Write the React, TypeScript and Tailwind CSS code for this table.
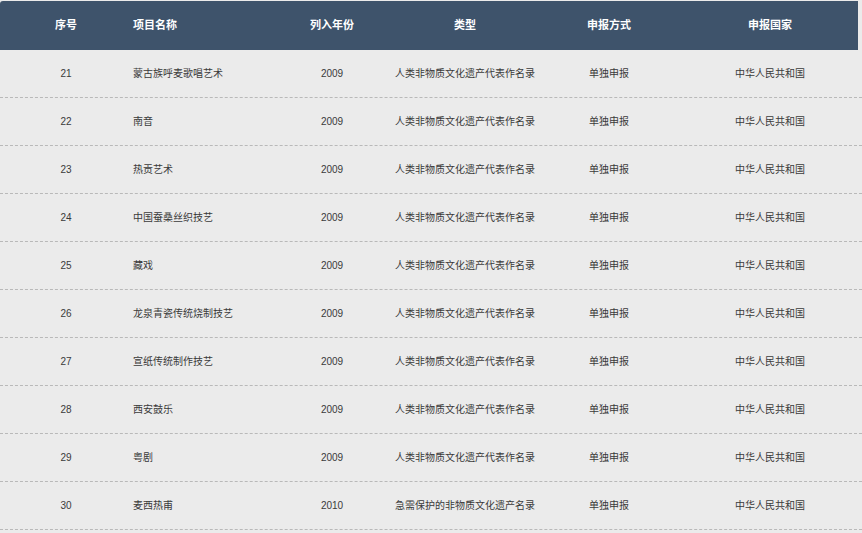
const rows = [
  ["21", "蒙古族呼麦歌唱艺术", "2009", "人类非物质文化遗产代表作名录"],
  ["22", "南音", "2009", "人类非物质文化遗产代表作名录"],
  ["23", "热贡艺术", "2009", "人类非物质文化遗产代表作名录"],
  ["24", "中国蚕桑丝织技艺", "2009", "人类非物质文化遗产代表作名录"],
  ["25", "藏戏", "2009", "人类非物质文化遗产代表作名录"],
  ["26", "龙泉青瓷传统烧制技艺", "2009", "人类非物质文化遗产代表作名录"],
  ["27", "宣纸传统制作技艺", "2009", "人类非物质文化遗产代表作名录"],
  ["28", "西安鼓乐", "2009", "人类非物质文化遗产代表作名录"],
  ["29", "粤剧", "2009", "人类非物质文化遗产代表作名录"],
  ["30", "麦西热甫", "2010", "急需保护的非物质文化遗产名录"],
];

const cols = "grid grid-cols-[132px_140px_120px_146px_142px_180px]";

export default function App() {
  return (
    <div
      className="w-[862px] h-[533px] overflow-hidden bg-[#ebebeb] text-[#3a3a3a]"
      style={{ fontFamily: '"Liberation Sans", "Noto Sans CJK SC", sans-serif' }}
    >
      <div className="pt-px pr-[4px]">
        <div className={`${cols} h-[49px] items-center bg-[#3e536b] rounded-tl-[3px] text-white text-[11px] font-bold`}>
          <div className="text-center">序号</div>
          <div className="pl-px">项目名称</div>
          <div className="text-center">列入年份</div>
          <div className="text-center">类型</div>
          <div className="text-center">申报方式</div>
          <div className="text-center">申报国家</div>
        </div>
      </div>
      {rows.map((r) => (
        <div
          key={r[0]}
          className={`${cols} h-[48px] items-center border-b border-dashed border-[#b9b9b9] text-[10px]`}
        >
          <div className="text-center">{r[0]}</div>
          <div className="pl-px">{r[1]}</div>
          <div className="text-center">{r[2]}</div>
          <div className="text-center whitespace-nowrap">{r[3]}</div>
          <div className="text-center">单独申报</div>
          <div className="text-center">中华人民共和国</div>
        </div>
      ))}
    </div>
  );
}
